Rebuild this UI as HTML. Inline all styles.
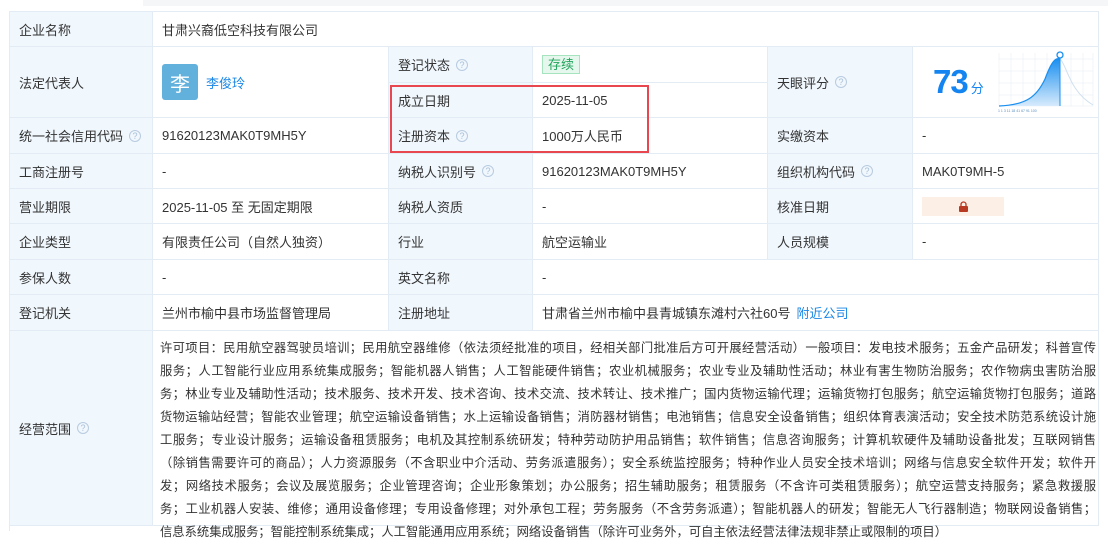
<!DOCTYPE html>
<html><head><meta charset="utf-8"><style>
*{margin:0;padding:0;box-sizing:border-box}
body{width:1108px;height:515px;overflow:hidden;background:#fff;font-family:"Liberation Sans","Noto Sans CJK SC",sans-serif;font-size:13px;color:#333;position:relative}
.c{position:absolute;border-right:1px solid #e3ebf4;border-bottom:1px solid #e3ebf4;display:flex;align-items:center;padding-left:9px;white-space:nowrap}
.l{background:#f0f7fd}
.q{display:inline-block;width:12px;height:12px;border:1px solid #b8cbe0;border-radius:50%;color:#a9bfd6;font-size:9px;line-height:10px;text-align:center;margin-left:6px;font-family:"Liberation Sans",sans-serif}
.sc div{width:936px;text-align:justify;text-align-last:justify;height:23px;line-height:23px;white-space:nowrap;font-size:12.3px;overflow:hidden}
</style></head><body>
<div style="position:absolute;left:143px;top:0;width:965px;height:6px;background:#f4f6f8"></div>
<div style="position:absolute;left:9px;top:11px;width:1090px;height:520px;border-left:1px solid #e3ebf4;border-top:1px solid #e3ebf4"></div>
<div class="c l" style="left:10px;top:12px;width:143px;height:35px">企业名称</div>
<div class="c" style="left:153px;top:12px;width:946px;height:35px">甘肃兴裔低空科技有限公司</div>
<div class="c l" style="left:10px;top:47px;width:143px;height:71px">法定代表人</div>
<div class="c" style="left:153px;top:47px;width:236px;height:71px"><span style="width:36px;height:36px;background:#62b1dc;border-radius:3px;color:#fff;font-size:20px;display:flex;align-items:center;justify-content:center">李</span><span style="color:#1a87e6;margin-left:8px">李俊玲</span></div>
<div class="c l" style="left:389px;top:47px;width:144px;height:36px">登记状态<span class="q">?</span></div>
<div class="c" style="left:533px;top:47px;width:235px;height:36px"><span style="background:#e6f8ee;border:1px solid #a6e3bf;color:#22a35c;padding:0 5px;height:19px;line-height:17px">存续</span></div>
<div class="c l" style="left:389px;top:83px;width:144px;height:35px">成立日期</div>
<div class="c" style="left:533px;top:83px;width:235px;height:35px">2025-11-05</div>
<div class="c l" style="left:768px;top:47px;width:145px;height:71px">天眼评分<span class="q">?</span></div>
<div class="c" style="left:913px;top:47px;width:186px;height:71px;padding-left:20px;align-items:center">
<span style="color:#1484f0;font-weight:bold;font-size:33px;letter-spacing:-1px">73</span><span style="color:#1484f0;font-size:13px;margin:10px 0 0 3px">分</span>
<svg width="98" height="64" viewBox="0 0 98 62" style="margin-left:13px">
<g stroke="#e6edf5" stroke-width="0.6"><path d="M2 2V55M14 2V55M26 2V55M38 2V55M50 2V55M62 2V55M74 2V55M86 2V55M96 2V55M2 8H96M2 20H96M2 32H96M2 44H96M2 55H96"/></g>
<defs><linearGradient id="g" x1="0" y1="0" x2="0" y2="1"><stop offset="0" stop-color="#1a8ff0"/><stop offset="1" stop-color="#d7ebfc"/></linearGradient></defs>
<path d="M2 55C30 54 40 45 48 28C54 12 58 6 63 8V55Z" fill="url(#g)"/>
<path d="M63 8C70 14 72 40 96 54" fill="none" stroke="#cfe0f0"/>
<path d="M2 55C30 54 40 45 48 28C54 12 58 6 63 8" fill="none" stroke="#1a8ff0" stroke-width="1.2"/>
<line x1="63" y1="6" x2="63" y2="55" stroke="#1a8ff0"/><circle cx="63" cy="4" r="3" fill="#fff" stroke="#1a8ff0" stroke-width="1.3"/>
<text x="1" y="61" font-size="3.5" fill="#5a8fc0">1 1 3 11 18 41 67 91 100</text>
</svg></div>
<div class="c l" style="left:10px;top:118px;width:143px;height:36px">统一社会信用代码<span class="q">?</span></div>
<div class="c" style="left:153px;top:118px;width:236px;height:36px">91620123MAK0T9MH5Y</div>
<div class="c l" style="left:389px;top:118px;width:144px;height:36px">注册资本<span class="q">?</span></div>
<div class="c" style="left:533px;top:118px;width:235px;height:36px">1000万人民币</div>
<div class="c l" style="left:768px;top:118px;width:145px;height:36px">实缴资本</div>
<div class="c" style="left:913px;top:118px;width:186px;height:36px">-</div>
<div class="c l" style="left:10px;top:154px;width:143px;height:35px">工商注册号</div>
<div class="c" style="left:153px;top:154px;width:236px;height:35px">-</div>
<div class="c l" style="left:389px;top:154px;width:144px;height:35px">纳税人识别号<span class="q">?</span></div>
<div class="c" style="left:533px;top:154px;width:235px;height:35px">91620123MAK0T9MH5Y</div>
<div class="c l" style="left:768px;top:154px;width:145px;height:35px">组织机构代码<span class="q">?</span></div>
<div class="c" style="left:913px;top:154px;width:186px;height:35px">MAK0T9MH-5</div>
<div class="c l" style="left:10px;top:189px;width:143px;height:35px">营业期限</div>
<div class="c" style="left:153px;top:189px;width:236px;height:35px">2025-11-05 至 无固定期限</div>
<div class="c l" style="left:389px;top:189px;width:144px;height:35px">纳税人资质</div>
<div class="c" style="left:533px;top:189px;width:235px;height:35px">-</div>
<div class="c l" style="left:768px;top:189px;width:145px;height:35px">核准日期</div>
<div class="c" style="left:913px;top:189px;width:186px;height:35px"><span style="width:82px;height:19px;background:#fcefe6;display:flex;align-items:center;justify-content:center"><svg width="11" height="11" viewBox="0 0 11 11"><path d="M3 5V3.5a2.5 2.5 0 0 1 5 0V5" fill="none" stroke="#b83a22" stroke-width="1.3"/><rect x="1" y="5" width="9" height="6" rx="1" fill="#b83a22"/></svg></span></div>
<div class="c l" style="left:10px;top:224px;width:143px;height:36px">企业类型</div>
<div class="c" style="left:153px;top:224px;width:236px;height:36px">有限责任公司（自然人独资）</div>
<div class="c l" style="left:389px;top:224px;width:144px;height:36px">行业</div>
<div class="c" style="left:533px;top:224px;width:235px;height:36px">航空运输业</div>
<div class="c l" style="left:768px;top:224px;width:145px;height:36px">人员规模</div>
<div class="c" style="left:913px;top:224px;width:186px;height:36px">-</div>
<div class="c l" style="left:10px;top:260px;width:143px;height:35px">参保人数</div>
<div class="c" style="left:153px;top:260px;width:236px;height:35px">-</div>
<div class="c l" style="left:389px;top:260px;width:144px;height:35px">英文名称</div>
<div class="c" style="left:533px;top:260px;width:566px;height:35px">-</div>
<div class="c l" style="left:10px;top:295px;width:143px;height:36px">登记机关</div>
<div class="c" style="left:153px;top:295px;width:236px;height:36px">兰州市榆中县市场监督管理局</div>
<div class="c l" style="left:389px;top:295px;width:144px;height:36px">注册地址</div>
<div class="c" style="left:533px;top:295px;width:566px;height:36px">甘肃省兰州市榆中县青城镇东滩村六社60号<span style="color:#1a87e6;margin-left:6px">附近公司</span></div>
<div class="c l" style="left:10px;top:331px;width:143px;height:195px">经营范围<span class="q">?</span></div>
<div class="c sc" style="left:153px;top:331px;width:946px;height:195px;display:block;padding:6px 0 0 7px">
<div>许可项目：民用航空器驾驶员培训；民用航空器维修（依法须经批准的项目，经相关部门批准后方可开展经营活动）一般项目：发电技术服务；五金产品研发；科普宣传</div>
<div>服务；人工智能行业应用系统集成服务；智能机器人销售；人工智能硬件销售；农业机械服务；农业专业及辅助性活动；林业有害生物防治服务；农作物病虫害防治服</div>
<div>务；林业专业及辅助性活动；技术服务、技术开发、技术咨询、技术交流、技术转让、技术推广；国内货物运输代理；运输货物打包服务；航空运输货物打包服务；道路</div>
<div>货物运输站经营；智能农业管理；航空运输设备销售；水上运输设备销售；消防器材销售；电池销售；信息安全设备销售；组织体育表演活动；安全技术防范系统设计施</div>
<div>工服务；专业设计服务；运输设备租赁服务；电机及其控制系统研发；特种劳动防护用品销售；软件销售；信息咨询服务；计算机软硬件及辅助设备批发；互联网销售</div>
<div>（除销售需要许可的商品）；人力资源服务（不含职业中介活动、劳务派遣服务）；安全系统监控服务；特种作业人员安全技术培训；网络与信息安全软件开发；软件开</div>
<div>发；网络技术服务；会议及展览服务；企业管理咨询；企业形象策划；办公服务；招生辅助服务；租赁服务（不含许可类租赁服务）；航空运营支持服务；紧急救援服</div>
<div>务；工业机器人安装、维修；通用设备修理；专用设备修理；对外承包工程；劳务服务（不含劳务派遣）；智能机器人的研发；智能无人飞行器制造；物联网设备销售；</div>
<div style="text-align-last:left">信息系统集成服务；智能控制系统集成；人工智能通用应用系统；网络设备销售（除许可业务外，可自主依法经营法律法规非禁止或限制的项目）</div>
</div>
<div style="position:absolute;left:390px;top:85px;width:259px;height:68px;border:2px solid #e8474f"></div>
</body></html>
